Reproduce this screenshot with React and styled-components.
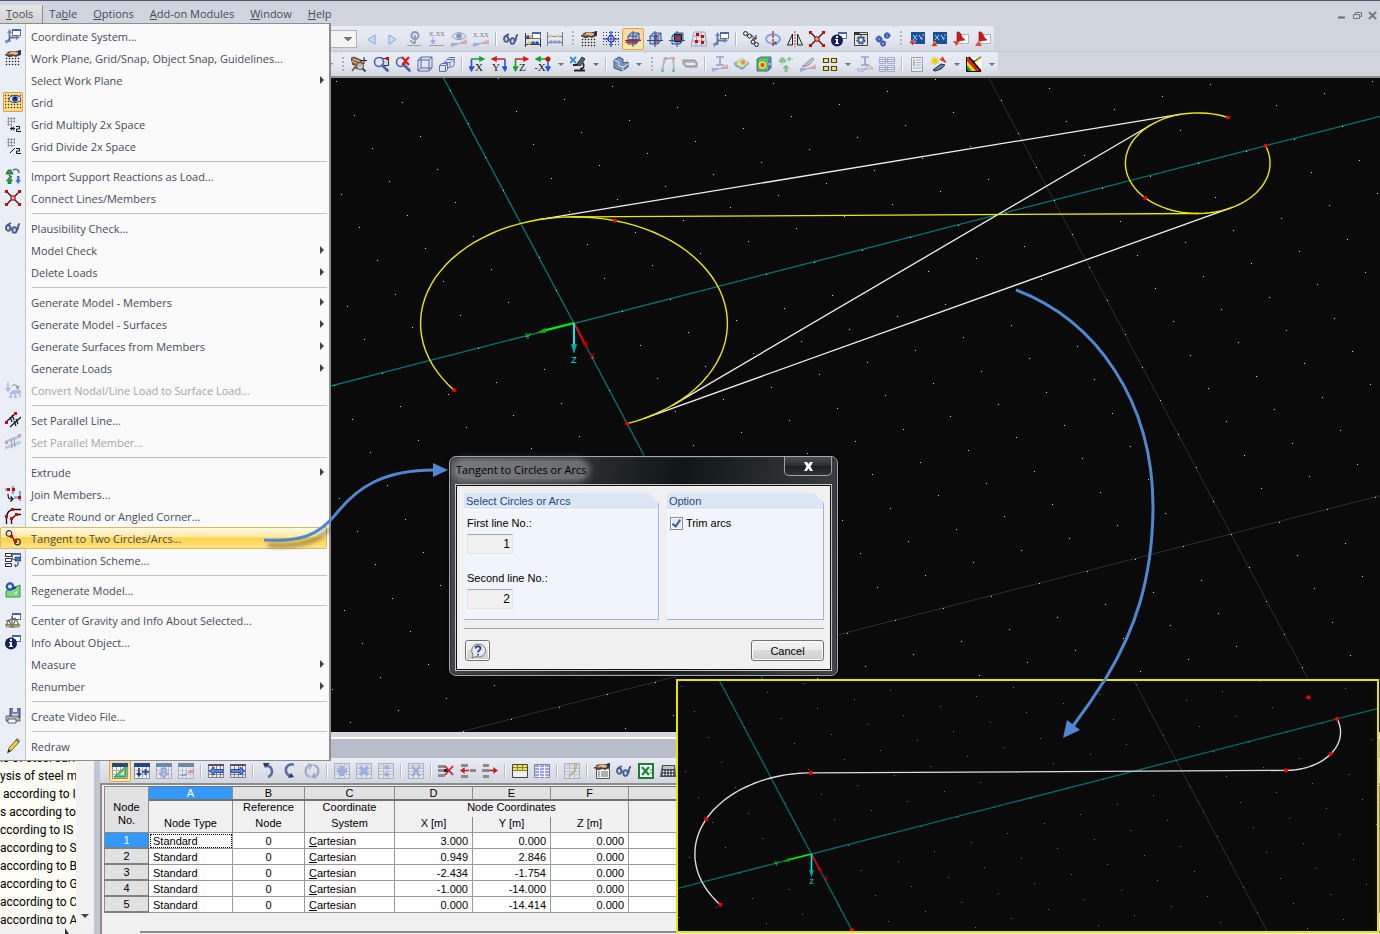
import React from "react";
import styled, { createGlobalStyle } from "styled-components";

const GlobalStyle = createGlobalStyle`
  *, *::before, *::after { box-sizing: border-box; }
  html, body { margin: 0; padding: 0; }
  body {
    font-family: "Liberation Sans", Arial, sans-serif;
    font-size: 11px;
    color: #000;
    background: #d0d4dd;
  }
  button { font: inherit; color: inherit; padding: 0; border: 0; background: none; }
`;

const uiFont = `"Open Sans", "Noto Sans", sans-serif`;

const Page = styled.div`
  position: relative;
  display: flex;
  flex-direction: column;
  height: 100vh;
  overflow: hidden;
  border-top: 1px solid #4d566c;
`;

const MenuBar = styled.nav`
  display: flex;
  height: 25px;
  padding-top: 4px;
  background: #d0d4dd;
`;

const MenuBarItem = styled.button`
  height: 20px;
  padding: 0 9px 2px 6px;
  font-family: ${uiFont};
  font-size: 11px;
  line-height: 16px;
  color: #444c5c;
  border-right: 1px solid ${(p) => (p.$open ? "#8f8f8f" : "transparent")};
  background: ${(p) => (p.$open ? "linear-gradient(#e6e6e6, #cfcfcf)" : "none")};
`;

const WindowButtons = styled.div`
  display: flex;
  gap: 4px;
  margin-left: auto;
  padding: 4px 1px 0 0;
`;

const WindowButton = styled.button`
  width: 12px;
  height: 12px;
  svg { display: block; }
`;

const ToolRow = styled.div`
  display: flex;
  height: 26px;
  border-bottom: ${(p) => (p.$last ? "2px solid #929292" : "1px solid #c3c7cf")};
`;

const ToolGroup = styled.div`
  position: relative;
  display: flex;
  align-items: center;
  height: 100%;
  padding-left: ${(p) => (p.$grip ? 12 : 0)}px;
  border-radius: 3px;
  background: linear-gradient(#e9ecf4, #e2e6ef 55%, #d2d6df);

  &::before {
    content: "";
    display: ${(p) => (p.$grip ? "block" : "none")};
    position: absolute;
    left: 6px;
    top: 5px;
    width: 2px;
    height: 15px;
    background: repeating-linear-gradient(#aeb2bd 0 2px, transparent 2px 4px);
  }
`;

const ToolButton = styled.button`
  display: flex;
  align-items: center;
  justify-content: center;
  width: 22px;
  height: 22px;
  flex: none;
  border-radius: 2px;
  border: 1px solid ${(p) => (p.$on ? "#e8a33d" : "transparent")};
  background: ${(p) => (p.$on ? "linear-gradient(#fdd79a, #ffe9a8)" : "none")};
  svg { opacity: ${(p) => (p.$dim ? 0.6 : 1)}; }
`;

const DropButton = styled.button`
  width: 13px;
  height: 22px;
  flex: none;
  &::after {
    content: "";
    display: block;
    margin: 1px auto 0;
    width: 6px;
    border: 3px solid transparent;
    border-top-color: #6d7078;
    border-bottom: 0;
  }
`;

const Separator = styled.span`
  width: 8px;
  height: 14px;
  flex: none;
  background: linear-gradient(90deg, transparent 3px, #b4b8c2 3px 4px, #fff 4px 5px, transparent 5px);
`;

const CaseSelect = styled.select`
  width: 357px;
  height: 18px;
  margin-right: 3px;
  border: 1px solid #b3b3b3;
  border-radius: 0;
  background: #f4f4f4;
  appearance: none;
  background-image: linear-gradient(45deg, transparent 50%, #777 50%), linear-gradient(-45deg, transparent 50%, #777 50%);
  background-size: 4px 4px;
  background-position: right 8px center, right 4px center;
  background-repeat: no-repeat;
`;

const HiddenTools = styled.div`
  width: 323px;
`;

const Workspace = styled.div`
  display: flex;
  flex: 1;
  min-height: 0;
`;

const Sidebar = styled.aside`
  display: flex;
  flex-direction: column;
  width: 94px;
  flex: none;
  background: #f0f0f0;
`;

const TreeArea = styled.div`
  display: flex;
  flex: 1;
  min-height: 0;
`;

const Tree = styled.ul`
  display: flex;
  flex-direction: column;
  justify-content: flex-end;
  width: 76px;
  margin: 0;
  padding: 0;
  list-style: none;
  overflow: hidden;
  background: #fcfcf3;
`;

const TreeItem = styled.li`
  height: 18px;
  flex: none;
  font-family: Roboto, ${uiFont};
  font-size: 12px;
  line-height: 18px;
  white-space: pre;
  &:last-child { height: 13px; }
`;

const ScrollTrack = styled.div`
  display: flex;
  align-items: flex-end;
  justify-content: center;
  width: 17px;
  padding-bottom: 5px;
  background: #f2f2f2;
`;

const ScrollFoot = styled.div`
  height: 10px;
  padding: 4px 0 0 64px;
  line-height: 0;
  background: #f0f0f0;
`;

const Main = styled.main`
  display: flex;
  flex-direction: column;
  flex: 1;
  min-width: 0;
  border-left: 6px solid #c0c7d3;
`;

const Canvas = styled.div`
  flex: 1;
  min-height: 0;
  overflow: hidden;
  background: #0a0a0a;
  svg { display: block; width: 100%; height: 100%; }
`;

const PanelTitle = styled.div`
  height: 26px;
  border-top: 5px solid #d3d7e0;
  background: linear-gradient(#fff 2px, #b7bdc9 2px);
`;

const PanelTools = styled.div`
  display: flex;
  align-items: center;
  height: 25px;
  padding-left: 9px;
  overflow: hidden;
  background: linear-gradient(#e9ecf4, #d2d6df);
`;

const TableArea = styled.div`
  height: 151px;
  padding: 1px 0 0 2px;
  border-top: 2px solid #8c8c8c;
  border-left: 2px solid #8c8c8c;
  background: #f0f0f0;
`;

const Grid = styled.table`
  width: 100%;
  table-layout: fixed;
  border-collapse: separate;
  border-spacing: 0;
  font-size: 11px;
`;

const HeadCell = styled.th`
  height: ${(p) => (p.$letter ? 15 : 16)}px;
  padding: 0;
  font-weight: normal;
  vertical-align: top;
  line-height: 12px;
  color: ${(p) => (p.$on ? "#fff" : "#000")};
  background: ${(p) => (p.$on ? "#3399ff" : p.$letter ? "#e1e1e1" : "#f0f0f0")};
  border-right: 1px solid #8c8c8c;
  border-bottom: ${(p) => (p.$letter ? "2px solid #707070" : p.$base ? "1px solid #9b9b9b" : "0")};
  border-top: ${(p) => (p.$letter ? "1px solid #707070" : "0")};
`;

const CornerCell = styled.th`
  padding: 8px 0 0;
  font-weight: normal;
  line-height: 13px;
  background: #e1e1e1;
  border: 1px solid #8c8c8c;
`;

const RowHead = styled.th`
  height: 16px;
  padding: 0;
  font-weight: normal;
  line-height: 13px;
  color: ${(p) => (p.$on ? "#fff" : "#000")};
  background: ${(p) => (p.$on ? "#3399ff" : "#e1e1e1")};
  border-left: 1px solid #8c8c8c;
  border-right: 1px solid #707070;
  border-bottom: 2px solid #808080;
`;

const Cell = styled.td`
  height: 16px;
  padding: 0 4px;
  line-height: 14px;
  text-align: ${(p) => p.$align || "left"};
  background: #fff;
  border-right: 1px solid #9b9b9b;
  border-bottom: 1px solid #9b9b9b;
  outline: ${(p) => (p.$focus ? "1px dotted #000" : "0")};
  outline-offset: -2px;
`;

const TabStrip = styled.div`
  height: 3px;
  margin: 18px 0 0 36px;
  border-top: 2px solid #8c8c8c;
`;

const ToolsMenu = styled.div`
  position: absolute;
  left: 0;
  top: 22px;
  width: 331px;
  padding: 1px 2px 3px 0;
  border: 1px solid #8e8e8e;
  border-left: 0;
  border-right-width: 2px;
  background: linear-gradient(90deg, #e9eef7 25px, #c5c5c5 25px 26px, #fafafa 26px);
`;

const MenuItem = styled.button`
  display: flex;
  align-items: center;
  width: 100%;
  height: 22px;
  font-family: ${uiFont};
  font-size: 11px;
  text-align: left;
  color: ${(p) => (p.disabled ? "#a4a4a4" : "#444c5c")};
  border-radius: 2px;
  background: ${(p) => (p.$hot ? "linear-gradient(#fffbe6, #ffe9a6 45%, #ffd449 50%, #ffe48c)" : "none")};
  box-shadow: ${(p) => (p.$hot ? "inset 0 0 0 1px #dbb865" : "none")};
`;

const MenuIcon = styled.span`
  display: flex;
  align-items: center;
  justify-content: center;
  width: 20px;
  height: 20px;
  margin: 0 8px 0 3px;
  border-radius: 2px;
  opacity: ${(p) => (p.$dim ? 0.5 : 1)};
  background: ${(p) => (p.$on ? "#ffdf88" : "none")};
  box-shadow: ${(p) => (p.$on ? "inset 0 0 0 1px #f0963c" : "none")};
`;

const SubArrow = styled.span`
  margin-left: auto;
  margin-right: 3px;
  border: 4px solid transparent;
  border-left: 4px solid #3c4450;
  border-right: 0;
`;

const MenuRule = styled.hr`
  height: 1px;
  margin: 4px 0 3px 32px;
  border: 0;
  background: #c2c2c2;
`;

const Dialog = styled.section`
  position: absolute;
  left: 449px;
  top: 455px;
  width: 389px;
  padding: 0 5px 4px;
  border: 1px solid #a6a8aa;
  border-radius: 7px;
  background: linear-gradient(100deg, #4a4d50, #24282b 38%, #101517 55%, #2c3033 80%, #44474a);
  box-shadow: inset 0 0 0 1px #2c2f31, 0 0 3px #000;
`;

const DialogBar = styled.header`
  display: flex;
  justify-content: space-between;
  height: 27px;
`;

const DialogTitle = styled.h1`
  margin: 4px 0 0;
  padding: 0 1px;
  height: 18px;
  font-family: ${uiFont};
  font-size: 11px;
  font-weight: normal;
  line-height: 18px;
  color: #000;
  border-radius: 9px;
  background: rgba(150, 152, 154, 0.6);
  box-shadow: 0 0 6px 3px rgba(150, 152, 154, 0.6);
`;

const CloseButton = styled.button`
  display: flex;
  align-items: center;
  justify-content: center;
  width: 48px;
  height: 19px;
  border: 1px solid #a0a2a4;
  border-top: 0;
  border-radius: 0 0 5px 5px;
  background: linear-gradient(#4b4e50, #2b2e31 50%, #1b1f22 50%, #303336);
`;

const DialogBody = styled.div`
  padding: 8px 7px 9px 8px;
  border: 1px solid #c8c8c8;
  outline: 1px solid #111;
  outline-offset: -2px;
  background: #f0f0f0;
`;

const GroupRow = styled.div`
  display: flex;
  gap: 8px;
  padding-bottom: 8px;
  border-bottom: 1px solid #a0a0a0;
`;

const Group = styled.fieldset`
  flex: ${(p) => p.$grow};
  min-width: 0;
  height: 127px;
  margin: 0;
  padding: 0;
  border: 0;
  border-right: 1px solid #a9a9ef;
  border-bottom: 1px solid #a9a9ef;
  background: #f0f4fb;
  clip-path: polygon(0 0, calc(100% - 10px) 0, 100% 10px, 100% 100%, 0 100%);
`;

const GroupTitle = styled.legend`
  float: left;
  width: 100%;
  height: 17px;
  padding: 0 2px;
  line-height: 17px;
  color: #1c4a80;
  background: #dce6f4;
  border-bottom: 1px solid #fff;
`;

const FieldList = styled.div`
  clear: both;
  display: flex;
  flex-direction: column;
  gap: 17px;
  padding: 6px 3px;
`;

const Field = styled.label`
  display: flex;
  flex-direction: column;
  gap: 3px;
  line-height: 15px;
`;

const NumberInput = styled.input`
  width: 46px;
  height: 20px;
  padding: 0 2px;
  font: inherit;
  font-size: 12px;
  text-align: right;
  border: 1px solid #dfe3ee;
  border-top-color: #a8aab2;
  background: #f0f0f0;
`;

const CheckLabel = styled.label`
  display: flex;
  align-items: center;
  gap: 3px;
  line-height: 15px;
`;

const CheckBox = styled.input`
  appearance: none;
  width: 13px;
  height: 13px;
  margin: 0;
  border: 1px solid #8a8b8d;
  background: #e6e9ef;
  box-shadow: inset 0 0 0 1px #fff;
  &:checked::after {
    content: "";
    display: block;
    width: 5px;
    height: 9px;
    margin: 0 0 0 3px;
    border: solid #3f569c;
    border-width: 0 2px 2px 0;
    transform: rotate(35deg);
  }
`;

const DialogFoot = styled.footer`
  display: flex;
  justify-content: space-between;
  padding: 11px 0 0 1px;
`;

const PushButton = styled.button`
  display: flex;
  align-items: center;
  justify-content: center;
  width: ${(p) => p.$width}px;
  height: 21px;
  border: 1px solid #707070;
  border-radius: 3px;
  background: linear-gradient(#f3f3f3, #ebebeb 48%, #dbdbdb 50%, #cfcfcf);
  box-shadow: inset 0 0 0 1px #fcfcfc;
`;

const Inset = styled.div`
  position: absolute;
  right: 1px;
  bottom: 1px;
  width: 703px;
  height: 254px;
  border: 2px solid #e4e400;
  background: #0a0a0a;
  svg { display: block; }
`;

const Arrows = styled.svg`
  position: absolute;
  left: 0;
  top: -1px;
  pointer-events: none;
`;

/* ---------- icons, all on a 16 x 16 grid ---------- */

const dotRows = (x0, y0, x1, y1, step = 3) => {
  let d = "";
  for (let y = y0; y <= y1; y += step) {
    for (let x = x0; x <= x1; x += step) d += `M${x} ${y}h1v1h-1z`;
  }
  return d;
};

const Nodes = ({ at, fill = "#e00000" }) =>
  at.map(([x, y]) => <rect key={`${x}-${y}`} x={x} y={y} width="3" height="3" fill={fill} />);

const MiniWindow = () => (
  <g>
    <rect x="7.500" y="1.500" width="8" height="6" fill="#fff" stroke="#6a7180" />
    <path d="M7 1h9v2H7z" fill="#4767a8" />
  </g>
);

const Sheet = () => (
  <g>
    <rect x=".5" y=".5" width="15" height="15" fill="#f4f5f7" stroke="#8b8f96" />
    <path d="M0 0h16v4H0z" fill="#23497e" />
    <path d="M.5 7.500h15M.5 11.500h15M4.500 4v12M8.500 4v12M12.500 4v12" stroke="#a9adb4" />
  </g>
);

const PlainSheet = () => (
  <g>
    <rect x=".5" y=".5" width="15" height="15" fill="#e6e9f0" stroke="#8e939c" />
    <path d="M1 1h14v4H1z" fill="#cdd2dc" />
    <path d="M1 5.500h14M1 8.500h14M1 11.500h14M5.500 1v14M10.500 1v14" stroke="#a7acb6" />
  </g>
);

const Hand = () => (
  <g>
    <path d="M5 1h7l4-1v5l-3 1-2 1-3-1-2 1-3 0-1-1-3-1 1-1 3 0-2-1z" fill="#5a4334" />
    <path d="M5 1.500l5 0 3 1v1.500l-3 1-3-1-2 .5-3-.5 3-1z" fill="#dcb896" />
    <path d="M13 1l3-1v4l-3 1z" fill="#30343e" />
  </g>
);

const Plane = ({ children }) => (
  <g>
    <path d="M3 5l3-3h8v7l-3 4H3z" fill="#a9cdf0" stroke="#24518f" />
    {children}
    <path d="M0 9.500h16M8 0v16M3 5h8v8M11 5l3-3" stroke="#24518f" fill="none" />
  </g>
);

const Axes = ({ v, h, text, flip }) => (
  <g>
    <path d={flip ? "M14 3v9M12 11l2 3.500 2-3.500z" : "M2.500 3v9M.5 11l2 3.500L4.500 11z"} stroke={v} fill={v} strokeWidth="1.600" />
    <path d={flip ? "M14 3H4M5 1.200L1.500 3 5 4.800z" : "M2 3h10M11 1.200L14.500 3 11 4.800z"} stroke={h} fill={h} strokeWidth="1.600" />
    <text x={flip ? 1 : 6} y="15" fontFamily="Liberation Serif, serif" fontSize="11" fill="#222">{text}</text>
  </g>
);

const Lens = () => (
  <g>
    <circle cx="6" cy="6" r="4.500" fill="#dce8fa" stroke="#4e66a8" strokeWidth="1.600" />
    <path d="M9.500 9.500l5 5" stroke="#4e66a8" strokeWidth="2.800" strokeLinecap="round" />
  </g>
);

const Slope = () => (
  <g>
    <path d="M0 13L8 13 0 16z" fill="#6e8fe6" />
    <path d="M8 12l8-4v4z" fill="#ec8585" />
    <path d="M0 12.500h16" stroke="#8a8f9a" />
  </g>
);

const IBeam = () => <path d="M4 1h8M8 1v8M4 9h8" stroke="#5b70b8" strokeWidth="1.600" fill="none" />;

const icons = {
  coord: (
    <g>
      <path d="M4.500 14V4M4 9.500h8M5 10l-3 4" stroke="#5d74a6" strokeWidth="1.800" fill="none" />
      <path d="M2 5l2.500-4L7 5zM11 7l4 2.500-4 2.500zM0 12l4 1-3 3z" fill="#6c84b8" />
      <MiniWindow />
    </g>
  ),
  handGrid: (
    <g>
      <path d={dotRows(1, 8, 14, 15)} fill="#222" stroke="#222" strokeWidth=".4" />
      <Hand />
    </g>
  ),
  eyeGrid: (
    <g>
      <path d={dotRows(0, 1, 15, 15)} fill="#403c20" stroke="#403c20" strokeWidth=".4" />
      <ellipse cx="10" cy="5" rx="6" ry="3.500" fill="#d8e2f4" stroke="#39405a" />
      <circle cx="10" cy="5" r="2.800" fill="#1c3f9c" />
      <circle cx="10" cy="4" r="1" fill="#000" />
    </g>
  ),
  gridMul: (
    <g>
      <path d="M2 2.500h8M2 5.500h8M2 8.500h5M3.500 1v9M6.500 1v9M9.500 1v6" stroke="#9b9b9b" />
      <path d="M5 12.500h5M6 10.500l3 4M9 10.500l-3 4" stroke="#111" />
      <path d="M11 10.500h3.500v2.500H11.500v2.500H16" stroke="#111" fill="none" />
    </g>
  ),
  gridDiv: (
    <g>
      <path d="M2 1.500h8M2 4.500h8M2 7.500h8M3.500 0v9M6.500 0v9M9.500 0v6" stroke="#9b9b9b" />
      <path d="M5 15l5-5" stroke="#111" />
      <path d="M11 10.500h3.500v2.500H11.500v2.500H16" stroke="#111" fill="none" />
    </g>
  ),
  support: (
    <g>
      <path d="M1 6h7L6 2H3zM4 7h1v2h2l-2.500-1z" fill="#2f9a48" stroke="#165f28" strokeWidth=".8" />
      <path d="M3 16v-3H1.500l3-4 3 4H6v3z" fill="#2f9a48" stroke="#165f28" strokeWidth=".6" />
      <path d="M8 2c4-2 6 0 6 3" stroke="#5d6f94" strokeWidth="1.500" fill="none" />
      <path d="M12 8h2.500v4H16l-3 4-2.500-4H12z" fill="#4b6fd8" />
    </g>
  ),
  connect: (
    <g>
      <path d="M1.500 1.500l13 13M14.500 1.500l-13 13" stroke="#1d1d1d" strokeWidth="1.400" />
      <circle cx="8" cy="8" r="2.300" fill="#f19a9a" stroke="#c40000" />
      <Nodes at={[[0, 0], [13, 0], [0, 13], [13, 13]]} />
    </g>
  ),
  glasses: (
    <g fill="none" stroke="#4a5c8a" strokeWidth="1.800">
      <ellipse cx="3.200" cy="8" rx="2.200" ry="2.800" fill="#c3d2ee" />
      <ellipse cx="9.500" cy="10" rx="2.200" ry="2.800" fill="#c3d2ee" />
      <path d="M2 5l4-2M5.500 8.500l2 .5M11.500 10c3 0 0-6 3.500-6" />
    </g>
  ),
  convert: (
    <g fill="none" stroke="#6179d0" strokeWidth="1.300">
      <path d="M3 0v8M.5 6L3 9l2.500-3M6 11l2-2h7l-2 2zM6 11v4M10 11v4M15 9v6M4 15h3M9 15h3" />
      <path d="M7 4c3-2 5-1 6 2M11 5l2 2 1-3" stroke="#555" />
    </g>
  ),
  parLine: (
    <g>
      <path d="M1 10L11 1M5 15L16 5M5 5l2 5M7 3l2 5M9 9l2 5M11 7l2 5" stroke="#1a1a1a" strokeWidth="1.300" />
      <Nodes at={[[0, 9], [9, 0]]} />
    </g>
  ),
  parMember: (
    <g>
      <path d="M0 8L16 2M0 14L16 8" stroke="#8ea9c8" strokeWidth="3" />
      <path d="M6 4l1 10M9 3l1 10" stroke="#555" />
      <Nodes at={[[0, 7], [13, 0]]} fill="#e84040" />
    </g>
  ),
  join: (
    <g>
      <path d="M0 3.500h5M8 0v8M15 5v10M9 11.500h7" stroke="#7fa9cf" strokeWidth="2.400" />
      <path d="M3 8c0 5 1 5 4 5M5.500 10.500L8 13l-2.500 2.500" stroke="#111" strokeWidth="1.200" fill="none" />
      <Nodes at={[[2, 2], [7, 2], [13, 10]]} />
    </g>
  ),
  corner: (
    <g>
      <path d="M1.500 16V9C2 4 5 2 8 1.500h8M6.500 16v-5l5-4.500H16" stroke="#111" strokeWidth="1.300" fill="none" />
      <Nodes at={[[0, 7], [6, 0], [5, 9], [10, 5]]} />
    </g>
  ),
  tangent: (
    <g fill="none">
      <circle cx="4" cy="3.500" r="2.800" stroke="#333" strokeWidth="1.200" />
      <circle cx="12.500" cy="12" r="2.800" stroke="#333" strokeWidth="1.200" />
      <path d="M6.500 4.500l3.500 8" stroke="#222" strokeWidth="1.300" />
      <Nodes at={[[5, 5], [9, 10]]} />
    </g>
  ),
  scheme: (
    <g>
      <path d="M.5 1.500h6v3h-6zM.5 6.500h6v3h-6zM.5 11.500h6v3h-6z" fill="#f4f4f4" stroke="#333" />
      <path d="M9 13h2M13 10v3l-3 2" stroke="#222" fill="none" />
      <MiniWindow />
      <path d="M10 5h6v4h-6z" fill="#3f6fd0" stroke="#223" strokeWidth=".6" />
    </g>
  ),
  regen: (
    <g>
      <path d="M1 9v6h14V3z" fill="#7fd884" stroke="#3c8f4b" />
      <path d="M9 12l3-3v3z" fill="#fff" />
      <circle cx="5" cy="4.500" r="3.200" fill="#dbe4f7" stroke="#2a4fa8" strokeWidth="2.200" />
      <path d="M8 7l3-2" stroke="#1d3775" strokeWidth="2" />
    </g>
  ),
  balance: (
    <g>
      <MiniWindow />
      <path d="M1 9l10-3M4 8l-3 5h5zM11 7l-3 6h6zM7 4v11M5 15h5" stroke="#5a5030" fill="none" />
      <path d="M.5 13h6l-1 2h-4zM8 13h7l-1 2H9z" fill="#d6c48a" stroke="#5a5030" strokeWidth=".6" />
    </g>
  ),
  info: (
    <g>
      <MiniWindow />
      <circle cx="6" cy="9.500" r="6" fill="#17205c" />
      <path d="M5 5h2v2H5zM4 8h3v4h1v1H4v-1h1V9H4z" fill="#fff" />
    </g>
  ),
  video: (
    <g>
      <path d="M5 0h10v10H5z" fill="#7482b4" stroke="#3e4668" />
      <path d="M8 0h4v4H8zM7 6h6v4H7z" fill="#e8ebf5" />
      <path d="M1 8h12l2 3v2H1z" fill="#b7b7b7" stroke="#444" strokeWidth=".8" />
      <path d="M3 11h8v4H3z" fill="#f5f5f5" stroke="#444" strokeWidth=".8" />
    </g>
  ),
  pencil: (
    <g>
      <path d="M3 14l1-4 7-8 3 2-7 8z" fill="#f2d33c" stroke="#403a20" strokeWidth=".8" />
      <path d="M11 2l1-1.500 2.500 2L14 4z" fill="#e28c8c" stroke="#553030" strokeWidth=".6" />
      <path d="M2 15.500l1.500-4L6 13z" fill="#222" />
    </g>
  ),
  prev: <path d="M12 4v9L5 8.500z" fill="#cfdffa" stroke="#7fa0dc" />,
  next: <path d="M4 4v9l7-4.500z" fill="#cfdffa" stroke="#7fa0dc" />,
  anchor: (
    <g fill="none" stroke="#4f6697">
      <circle cx="8" cy="4.500" r="3.500" strokeWidth="2" />
      <path d="M8 4v8c-2 0-4-1-4-3" strokeWidth="1.600" />
      <path d="M0 14.500h14" stroke="#777" />
    </g>
  ),
  xxDown: (
    <g>
      <text x="0" y="5" fontFamily="Liberation Serif, serif" fontSize="9" fill="#333">x.xx</text>
      <path d="M4 6v5M2 9.500l2 3.500 2-3.500z" stroke="#6c8bd8" fill="#6c8bd8" />
      <path d="M0 14.500h15" stroke="#777" />
    </g>
  ),
  eyeSlope: (
    <g>
      <Slope />
      <path d="M1 5.500c3-5 11-5 14 0-3 4-11 4-14 0z" fill="#dbe5f8" stroke="#667" />
      <circle cx="8" cy="5" r="2.800" fill="#3563b8" />
    </g>
  ),
  xxSlope: (
    <g>
      <text x="0" y="6" fontFamily="Liberation Serif, serif" fontSize="9" fill="#333">x.xx</text>
      <Slope />
    </g>
  ),
  abacus: (
    <g>
      <path d="M.5 2v14M15.500 2v14M0 7.500h16M0 13.500h16" stroke="#333" />
      <circle cx="3" cy="6" r="1.800" fill="#2e4a9c" />
      <circle cx="6" cy="6" r="1.800" fill="#e2c64c" />
      <circle cx="4" cy="12" r="1.800" fill="#e2c64c" />
      <circle cx="8" cy="12" r="1.800" fill="#2e4a9c" />
      <circle cx="12" cy="12" r="1.800" fill="#2e4a9c" />
      <MiniWindow />
    </g>
  ),
  abacusPlain: (
    <g opacity=".6">
      <path d="M.5 1v14M15.500 1v14M0 5.500h16M0 11.500h16" stroke="#333" />
      <circle cx="4" cy="5" r="1.800" fill="#d8bf57" />
      <circle cx="11" cy="5" r="1.800" fill="#d8bf57" />
      <circle cx="4" cy="11" r="1.800" fill="#4d6cb5" />
      <circle cx="8" cy="11" r="1.800" fill="#4d6cb5" />
      <circle cx="12" cy="11" r="1.800" fill="#4d6cb5" />
    </g>
  ),
  snap: (
    <g>
      <path d={dotRows(0, 1, 15, 15)} fill="#333" />
      <path d="M8 0v16M0 8h16" stroke="#1a2bbf" strokeWidth="1.200" />
      <circle cx="8" cy="8" r="3" fill="#fff" stroke="#1a2bbf" strokeWidth="1.200" />
      <path d="M8 6v4M6 8h4" stroke="#1a2bbf" />
    </g>
  ),
  planeXY: <Plane><path d="M0 12l4-4h12l-4 4z" fill="#e02a20" /></Plane>,
  planeYZ: <Plane><path d="M7 6l3-4v9l-3 4z" fill="#e0403a" /></Plane>,
  planeXZ: <Plane><path d="M5.500 3.500h7v7h-7z" fill="#e02a20" stroke="#200" /></Plane>,
  redGrid: (
    <g>
      <path d="M3 1h11l2 14H0zM2 5h13M1 10h14M6 1l-1 14M10 1l1 14" fill="none" stroke="#98a7b8" />
      <Nodes at={[[5, 2], [10, 4], [4, 9], [10, 10]]} />
    </g>
  ),
  copyNode: (
    <g fill="none" stroke="#222">
      <circle cx="2.500" cy="2.500" r="2" />
      <circle cx="6.500" cy="5" r="2" />
      <circle cx="10" cy="11" r="2" />
      <circle cx="13.500" cy="13.500" r="2" />
      <path d="M8 4l5 4M13 4v4H9" />
    </g>
  ),
  rotate: (
    <g fill="none">
      <ellipse cx="8" cy="8" rx="7" ry="4.500" stroke="#7ba0dc" strokeWidth="1.800" />
      <path d="M8 0v16" stroke="#e02020" strokeDasharray="3 1" strokeWidth="1.400" />
      <path d="M11 10l-4 3 5 1z" fill="#3f64ac" />
    </g>
  ),
  mirror: (
    <g fill="none" stroke="#222">
      <path d="M5.500 3v11H.5zM10.500 3v11h5z" />
      <path d="M8 0v16" stroke="#e02020" strokeDasharray="2 1" />
    </g>
  ),
  boxGear: (
    <g>
      <path d="M1.500 1.500h13v13h-13z" fill="#efe8cf" stroke="#444" />
      <path d="M1 1h5l1 2h8v1H1z" fill="#333" />
      <circle cx="8" cy="9" r="3.500" fill="none" stroke="#3d5ea8" strokeWidth="2.400" strokeDasharray="2 1" />
      <circle cx="8" cy="9" r="2.500" fill="#fff" stroke="#3d5ea8" strokeWidth="1.500" />
    </g>
  ),
  gears: (
    <g fill="#dfe8fa" stroke="#3b5db0" strokeWidth="1.800">
      <circle cx="4" cy="8" r="2.200" />
      <circle cx="12" cy="4.500" r="2.200" />
      <circle cx="8" cy="12.500" r="2" />
      <path d="M4 4v8M0 8h8M12 1v7M9 4.500h7M8 9.500v6" strokeWidth=".8" />
    </g>
  ),
  bgDown: (
    <g>
      <path d="M2 1h14v12H2z" fill="#1d4f96" />
      <path d="M4 4l4 5M8 4L4 9M10 4l3 5M13 4h2M11 7h3" stroke="#9fd4f5" />
      <path d="M0 10h7l-3.500 5z" fill="#e02a20" stroke="#fff" strokeWidth=".5" />
    </g>
  ),
  bgUp: (
    <g>
      <path d="M2 1h14v12H2z" fill="#1d4f96" />
      <path d="M4 4l4 5M8 4L4 9M10 4l3 5M13 4h2M11 7h3" stroke="#9fd4f5" />
      <path d="M0 15.500h7L3.500 10z" fill="#e02a20" stroke="#fff" strokeWidth=".5" />
    </g>
  ),
  pdfDown: (
    <g>
      <path d="M5.500 3.500h10v9h-10z" fill="#f8f8f8" stroke="#b5b5b5" />
      <path d="M4 1c5-1 3 5 8 8l-8 1z" fill="#d01818" stroke="#7c0c0c" strokeWidth=".6" />
      <path d="M0 10h7l-3.500 5z" fill="#e04a40" />
    </g>
  ),
  pdfUp: (
    <g>
      <path d="M5.500 3.500h10v9h-10z" fill="#f8f8f8" stroke="#b5b5b5" />
      <path d="M4 1c5-1 3 5 8 8l-8 1z" fill="#d01818" stroke="#7c0c0c" strokeWidth=".6" />
      <path d="M0 15h7l-3.500-5z" fill="#e04a40" />
    </g>
  ),
  pan: (
    <g>
      <path d="M0 2l3-1 7 3 2 4-3 3-4-2-3 0z" fill="#8c6b50" stroke="#4a3526" strokeWidth=".8" />
      <path d="M2 3l6 2 2 2M1 5l6 3" stroke="#e0c2a2" fill="none" />
      <path d="M13 1v7M9.500 4.500h7" stroke="#222" />
      <circle cx="9" cy="10" r="3.500" fill="#dcd5c8" fillOpacity=".7" stroke="#444" />
      <path d="M11.500 12.500l3 3" stroke="#444" strokeWidth="2" />
      <path d="M1 15l3-4 2 2" stroke="#6b5038" fill="none" strokeWidth="1.500" />
    </g>
  ),
  zoomWin: <g><path d="M7.500 2.500h8v7h-8z" fill="#d4d8e0" stroke="#333" /><Nodes at={[[6, 1], [13, 1]]} /><Lens /></g>,
  zoomOff: <g><Lens /><path d="M7 1l7 8M14 1L7 9" stroke="#e01818" strokeWidth="2.200" /></g>,
  cube: (
    <path d="M1 4l3-3h11v11l-3 3H1zM1 4h11v11M12 4l3-3M4 1v11H15M4 12l-3 3" fill="#dce6f8" fillOpacity=".6" stroke="#5568a4" />
  ),
  stack: (
    <path d="M.5 9.500h6v6h-6zM6.500 9.500l2-2h-6l-2 2M6.500 15.500l2-2v-6M5 6.500h6v5h-2M11 6.500l2-2M5 6.500l3-3h7v6l-3 2M8 3.500l2-2h6v5" fill="#dce6f8" stroke="#6375ac" />
  ),
  axX: <Axes v="#2952e0" h="#18a030" text="X" />,
  axY: <Axes v="#2952e0" h="#d02020" text="Y" flip />,
  axZ: <Axes v="#18a030" h="#d02020" text="Z" />,
  axMX: (
    <g>
      <path d="M13 4v8M11 11l2 3.500 2-3.500z" stroke="#2952e0" fill="#2952e0" strokeWidth="1.500" />
      <path d="M12 3H4M5 1L1 3l4 2z" stroke="#18a030" fill="#18a030" strokeWidth="1.500" />
      <circle cx="13" cy="3" r="2.500" fill="#c01010" />
      <text x="-1" y="15" fontFamily="Liberation Serif, serif" fontSize="11" fill="#222">-X</text>
    </g>
  ),
  view: (
    <g>
      <path d="M0 1l6 6M6 1L0 7" stroke="#2f8ad8" strokeWidth="1.800" />
      <path d="M12 1l3 2-5 7-3-2z" fill="#5b606b" stroke="#26282d" />
      <path d="M13 7c2 4 0 6-3 6M4 14.500h11M3 9h5" stroke="#26282d" strokeWidth="1.800" fill="none" />
    </g>
  ),
  solid: (
    <g>
      <path d="M1 4l5-3 4 2v4l5-1v5l-6 4-8-3z" fill="#7893b4" stroke="#3f5776" />
      <path d="M1 4l5 2v4l4 1 5-3M10 11v4" stroke="#dbe6f2" fill="none" />
    </g>
  ),
  frame: (
    <g>
      <path d="M2 14L5 3l8-1 1 12M5 3l-2 2" fill="none" stroke="#8a8a8a" strokeWidth="1.600" />
      <Nodes at={[[4, 1], [12, 1]]} fill="#e07070" />
      <Nodes at={[[1, 13], [12, 13]]} fill="#45b060" />
    </g>
  ),
  tube: (
    <g>
      <path d="M1 4h12l2 3v4H4L1 8z" fill="#b6b6b6" stroke="#8a8a8a" />
      <path d="M4 7h9v2H4z" fill="#eee" />
    </g>
  ),
  beamSlope: <g><Slope /><IBeam /></g>,
  surf: (
    <g>
      <path d="M1 6l7-4 7 4-6 7-7-2z" fill="#4fc46c" />
      <path d="M3 6l5-3 6 3-5 5-5-1z" fill="#f0e040" />
      <path d="M6 6l3-2 3 2-3 3z" fill="#e84030" />
      <path d="M1 6v3l7 4 7-6" stroke="#4a78d8" fill="none" strokeWidth="1.500" />
    </g>
  ),
  solidRes: (
    <g>
      <path d="M1 3l4-2h10v11l-3 3H1z" fill="#52c070" stroke="#356" strokeWidth=".8" />
      <circle cx="6.500" cy="9" r="3.800" fill="#f0e040" />
      <circle cx="6.500" cy="9" r="2" fill="#e84030" />
      <path d="M12 4l3-3v11l-3 3z" fill="#4a78d8" />
      <circle cx="13.500" cy="8" r="1.200" fill="#e8d040" />
    </g>
  ),
  supRes: (
    <path d="M1 6h7L6 2H3zM4 6v3M15 3h-4M12 1L9 3l3 2M7 16v-4H5l3-3 3 3H9v4z" fill="#49a860" stroke="#49a860" />
  ),
  wing: <g><Slope /><path d="M2 11L12 2l2 1-5 6z" fill="#9fb6dc" stroke="#556" /></g>,
  fourBox: (
    <path d="M1.500 2.500h5v4h-5zM9.500 2.500h5v4h-5zM1.500 10.500h5v4h-5zM9.500 10.500h5v4h-5z" fill="#f7e17c" stroke="#4d4420" strokeWidth="1.200" />
  ),
  beamWave: (
    <g>
      <IBeam />
      <path d="M0 13h16" stroke="#888" />
      <path d="M0 13c2 4 5 4 8 0" fill="none" stroke="#4a78e0" />
      <path d="M8 13c3-5 6-3 8 0" fill="none" stroke="#e04a4a" />
    </g>
  ),
  tables: (
    <path d="M.5 1.500h6v6h-6zM8.500 1.500h7v6h-7zM.5 9.500h6v6h-6zM8.500 9.500h7v6h-7zM0 3.500h16M0 5.500h16M0 11.500h16M0 13.500h16" fill="#e8edf8" stroke="#7784b0" />
  ),
  report: (
    <g>
      <path d="M2.500 1.500h11v14h-11z" fill="#f2f4f8" stroke="#6b7180" />
      <path d="M7 4h5M7 6.500h5M7 9h5M4 12h8" stroke="#7c90c0" />
      <path d="M4 3h2v3H4z" fill="#e8a050" />
      <path d="M4 6h2v4H4z" fill="#59b86a" />
    </g>
  ),
  wand: (
    <g>
      <path d="M4 1v8M0 5h8M1 2l6 6M7 2L1 8" stroke="#e8d414" strokeWidth="1.500" />
      <path d="M9 3l6 3M11 1l3 5" stroke="#d03030" strokeWidth="1.500" />
      <path d="M2 14l8-6 4 1-4 4-6 2z" fill="#5d82b6" stroke="#20283a" />
    </g>
  ),
  colors: (
    <g>
      <path d="M0 1h16v14H0z" fill="#fff" />
      <path d="M0 1h3l12 14H0z" fill="#e02020" />
      <path d="M0 4l10 11H0z" fill="#f0e000" />
      <path d="M0 8l6 7H0z" fill="#18a030" />
      <path d="M0 12l3 3H0z" fill="#1030c0" />
      <path d="M3 1l12 14M6 4l2 2 7-5" stroke="#111" strokeWidth="1.600" fill="none" />
      <path d="M.5 1v14.500H15" stroke="#111" fill="none" />
      <path d="M9 6l6-5" stroke="#d8bf3a" strokeWidth="1.500" />
    </g>
  ),
  tEdit: <g><Sheet /><path d="M2 14L14 3v11z" fill="#5fcf68" stroke="#2b7d36" /><path d="M8 12l4-4v4z" fill="#fff" /></g>,
  tInsert: <g><Sheet /><path d="M5 5v8M3 10l2 3 2-3M8 9h7M11.500 6v6" stroke="#1e3c8c" strokeWidth="1.500" fill="none" /></g>,
  tDown: <g><Sheet /><path d="M6 5h4v5h3l-5 5-5-5h3z" fill="#86a3ea" stroke="#4c68b8" /></g>,
  tSlope: <g><Sheet /><path d="M1 13l7-3v3z" fill="#5c7fe0" /><path d="M8 10l7-4v4z" fill="#e85a5a" /></g>,
  tLeft: (
    <g>
      <path d="M.5 1.500h15v13H.5zM4.500 1v14M8.500 1v14M12.500 1v14M1 11.500h15" fill="#eee" stroke="#7c8088" />
      <path d="M0 1h16v2H0z" fill="#50555e" />
      <path d="M1 8l5-4v2.500h9v3H6V12z" fill="#5a83ee" stroke="#1d358c" strokeWidth=".8" />
    </g>
  ),
  tRight: (
    <g>
      <path d="M.5 1.500h15v13H.5zM4.500 1v14M8.500 1v14M12.500 1v14M1 11.500h15" fill="#eee" stroke="#7c8088" />
      <path d="M0 1h16v2H0z" fill="#50555e" />
      <path d="M15 8l-5-4v2.500H1v3h9V12z" fill="#5a83ee" stroke="#1d358c" strokeWidth=".8" />
    </g>
  ),
  undo: (
    <g>
      <path d="M6 3c7-1 8 9 2 11" fill="none" stroke="#5a6f9c" strokeWidth="2.600" />
      <path d="M3 0h7l-5 5z" fill="#2c3c62" />
    </g>
  ),
  redo: (
    <g>
      <path d="M12 1.500H8C2 4 3 11 8 13" fill="none" stroke="#5a6f9c" strokeWidth="2.600" />
      <path d="M6 15l6-1-3-4z" fill="#2c3c62" />
    </g>
  ),
  refresh: (
    <g fill="none" stroke="#7387ad" strokeWidth="2.200">
      <path d="M7 2C0 3 0 12 6 14M9 14c7-1 7-10 1-12" />
      <path d="M5 6l3-4-4-1M11 10l-3 4 4 1" strokeWidth="1.500" />
    </g>
  ),
  tAdd: <g><PlainSheet /><path d="M8 3v10M3 8h10" stroke="#6f8be0" strokeWidth="4" /></g>,
  tMul: <g><PlainSheet /><path d="M4 4l8 8M12 4l-8 8" stroke="#6f8be0" strokeWidth="3.400" /></g>,
  tDivide: <g><PlainSheet /><path d="M7 3h3v3H7zM7 10h3v3H7z" fill="#6f8be0" stroke="#6f8be0" /></g>,
  tX: <g><PlainSheet /><path d="M4 3l8 10M12 3L4 13" stroke="#6682dd" strokeWidth="2" /></g>,
  rowDel: (
    <g>
      <path d="M0 2h7v3H0zM0 6h9v3H0zM0 11h7v3H0z" fill="#8a8a8a" />
      <path d="M6 6h4v3H6z" fill="#222" />
      <path d="M7 3l8 9M15 3l-8 9" stroke="#c82828" strokeWidth="1.800" />
    </g>
  ),
  rowIn: (
    <g>
      <path d="M1 1h7v3H1zM1 12h7v3H1zM10 6h6v3h-6z" fill="#8a8a8a" />
      <path d="M9 7.500H4M4 5.500L1 7.500l3 2z" stroke="#d01818" fill="#d01818" strokeWidth="1.300" />
    </g>
  ),
  rowOut: (
    <g>
      <path d="M1 1h6v3H1zM1 12h6v3H1zM0 6h7v3H0z" fill="#8a8a8a" />
      <path d="M7 7.500h5M12 5.500l3 2-3 2z" stroke="#d01818" fill="#d01818" strokeWidth="1.300" />
    </g>
  ),
  tYellow: (
    <g>
      <path d="M.5 1.500h15v13H.5z" fill="#eee" stroke="#444" />
      <path d="M1 2h14v5H1z" fill="#efe04c" />
      <path d="M1 4.500h14M1 7.500h14M5.500 2v6M10.500 2v6" stroke="#8c8330" />
    </g>
  ),
  tPurple: (
    <g>
      <path d="M.5 1.500h15v13H.5z" fill="#eceef8" stroke="#7d84b0" />
      <path d="M1 3h14M1 6h14M1 9h14M1 12h14" stroke="#8388e0" strokeWidth="1.500" />
      <path d="M5.500 2v13M10.500 2v13" stroke="#fff" />
    </g>
  ),
  tPick: <g><PlainSheet /><path d="M13 1l-2 8-6 5 2-4 3-1 1-8z" fill="#e6d35a" stroke="#8d7d2a" strokeWidth=".8" /></g>,
  handSheet: (
    <g>
      <path d="M2.500 5.500h13v10h-13z" fill="#f4f4f4" stroke="#555" />
      <path d="M4 9h2M7 9h7M4 11h2M7 11h7M4 13h2M7 13h7" stroke="#666" />
      <Hand />
    </g>
  ),
  excel: (
    <g>
      <path d="M1 1h14v14H1z" fill="#fff" stroke="#1e7a34" strokeWidth="2" />
      <path d="M4 4l7 8M11 4l-7 8" stroke="#1e8a3a" strokeWidth="2.400" />
      <path d="M12 7h2M12 10h2" stroke="#1e7a34" />
    </g>
  ),
  calc: (
    <g>
      <path d="M2 2h13l1 12H0z" fill="#4c5058" />
      <path d="M3 3h11v3H3z" fill="#b9c4b4" />
      <path d={dotRows(3, 8, 13, 13)} fill="#fff" stroke="#fff" strokeWidth=".6" />
    </g>
  ),
};

const Icon = ({ name }) => (
  <svg width="16" height="16" viewBox="0 0 16 16" aria-hidden="true">
    {icons[name]}
  </svg>
);

/* "|" is a separator, "v" a drop-down arrow, "*" marks a pressed tool, "~" a dimmed one */
const Tools = ({ list }) =>
  list.split(" ").map((entry, i) => {
    if (entry === "|") return <Separator key={i} />;
    if (entry === "v") return <DropButton key={i} aria-label="More" />;
    const name = entry.replace(/[*~]/, "");
    return (
      <ToolButton key={i} aria-label={name} $on={entry[0] === "*"} $dim={entry[0] === "~"}>
        <Icon name={name} />
      </ToolButton>
    );
  });

/* ---------- model view ---------- */

const RAD = Math.PI / 180;

// plan coordinates in metres to screen
const makeView = (ox, oy, scale) => (x, y) => [
  ox + scale * (x * 17.72 - y * 47.98),
  oy + scale * (x * 33.37 + y * 12.33),
];

const pt = ([x, y]) => `${x.toFixed(1)} ${y.toFixed(1)}`;

const circlePoint = (view, r, cy, deg) =>
  view(r * Math.cos(deg * RAD), cy + r * Math.sin(deg * RAD));

const arcPath = (view, r, cy, from, to) => {
  const steps = 72;
  let d = "";
  for (let i = 0; i <= steps; i++) {
    d += (i ? "L" : "M") + pt(circlePoint(view, r, cy, from + ((to - from) * i) / steps));
  }
  return d;
};

const gridDots = (view) => {
  let d = "";
  for (let x = -24; x <= 26; x++) {
    for (let y = -24; y <= 12; y++) {
      const [sx, sy] = view(x, y);
      if (sx > 90 && sx < 1500 && sy > 70 && sy < 940) d += `M${Math.round(sx)} ${Math.round(sy)}h1v1h-1z`;
    }
  }
  return d;
};

const R1 = 3;
const R2 = Math.SQRT2;
const mainView = makeView(574, 323.5, 1);
const insetView = makeView(811.5, 854, 0.76);

const Line = ({ view, from, to, color, width = 1 }) => (
  <path d={`M${pt(view(...from))}L${pt(view(...to))}`} stroke={color} strokeWidth={width} fill="none" />
);

const Tangent = ({ view, a, b, color }) => (
  <path
    d={`M${pt(circlePoint(view, R1, 0, a))}L${pt(circlePoint(view, R2, -13, b))}`}
    stroke={color}
    strokeWidth="1.3"
  />
);

const Points = ({ list }) =>
  list.map(([x, y], i) => <circle key={i} cx={x} cy={y} r="2.1" fill="#f00000" />);

const Triad = ({ x, y, scale }) => (
  <g transform={`translate(${x} ${y}) scale(${scale})`}>
    <path d="M0 0L-32 8" stroke="#00f000" strokeWidth="2" />
    <path d="M-38 10l9-5 1 5z" fill="#00a800" />
    <path d="M0 0L11 21" stroke="#f00000" strokeWidth="2" />
    <path d="M14 27l-6-7 5-2z" fill="#b00000" />
    <path d="M0 0v24" stroke="#00f0f0" strokeWidth="2" />
    <path d="M-3 21h6L0 31z" fill="#00a8a8" />
    <g fontFamily="Liberation Sans, sans-serif" fontSize="9" textAnchor="middle">
      <text x="-46" y="16" fill="#00e000">Y</text>
      <text x="0" y="40" fill="#00e0e0">Z</text>
      <text x="18" y="36" fill="#d00000">X</text>
    </g>
  </g>
);

const MainScene = () => (
  <svg role="img" aria-label="Model view">
    <g transform="translate(-100 -78)">
      <Line view={mainView} from={[10, 10]} to={[10, -20]} color="#303030" />
      <Line view={mainView} from={[-10, -10]} to={[14, -10]} color="#303030" />
      <Line view={mainView} from={[14, -10]} to={[16, -10]} color="#303030" />
      <Line view={mainView} from={[-9, 0]} to={[14, 0]} color="#007878" width="1.3" />
      <Line view={mainView} from={[0, 10]} to={[0, -20]} color="#007878" width="1.3" />
      <path d={gridDots(mainView)} fill="#ccd8cc" />
      <Tangent view={mainView} a={-173} b={-173} color="#f0f0f0" />
      <Tangent view={mainView} a={-7} b={-7} color="#f0f0f0" />
      <Tangent view={mainView} a={-19.85} b={160.15} color="#f0f0f0" />
      <g fill="none" stroke="#eaea00" strokeWidth="1.4">
        <path d={arcPath(mainView, R1, 0, 0, -288.4)} />
        <path d={arcPath(mainView, R2, -13, -90, 225)} />
      </g>
      <Tangent view={mainView} a={-160.15} b={19.85} color="#eaea00" />
      <Points
        list={[
          mainView(3, 0),
          mainView(0.949, 2.846),
          mainView(-2.434, -1.754),
          mainView(-1, -14),
          mainView(0, -14.414),
          mainView(0.557, -11.7),
        ]}
      />
      <Triad x={574} y={323} scale={1} />
    </g>
  </svg>
);

const InsetScene = () => (
  <svg width="699" height="250" role="img" aria-label="Result view">
    <g transform="translate(-678 -681)">
      <Line view={insetView} from={[-10, -10]} to={[14, -10]} color="#303030" />
      <Line view={insetView} from={[-9, 0]} to={[3, 0]} color="#006c6c" width="1.3" />
      <Line view={insetView} from={[0, 10]} to={[0, -20]} color="#006c6c" width="1.3" />
      <path d={gridDots(insetView)} fill="#707070" />
      <g fill="none" stroke="#dcdcdc" strokeWidth="1.4">
        <path d={arcPath(insetView, R1, 0, 71.6, 199.85)} />
        <path d={arcPath(insetView, R2, -13, -90, 19.85)} />
      </g>
      <Tangent view={insetView} a={-160.15} b={19.85} color="#dcdcdc" />
      <Points
        list={[
          insetView(3, 0),
          insetView(0.949, 2.846),
          circlePoint(insetView, R1, 0, 135.7),
          circlePoint(insetView, R1, 0, 199.85),
          circlePoint(insetView, R2, -13, 19.85),
          circlePoint(insetView, R2, -13, -35),
          insetView(0, -14.414),
          insetView(-1, -14),
        ]}
      />
      <Triad x={811.5} y={854} scale={0.76} />
    </g>
  </svg>
);

const PointerArrows = () => (
  <Arrows width="1380" height="934" aria-hidden="true">
    <filter id="soft" x="-10%" y="-20%" width="130%" height="150%">
      <feGaussianBlur stdDeviation="2" />
    </filter>
    <path d="M268 545C300 547 318 542 330 528" stroke="#000" strokeOpacity=".4" strokeWidth="4" fill="none" filter="url(#soft)" />
    <g fill="none" stroke="#4f88d0" strokeWidth="3">
      <path d="M264 540C300 542 318 536 336 514C358 486 385 470 434 470" />
      <path d="M1016 290C1095 320 1154 400 1153 510C1152 580 1135 630 1106 678C1096 694 1085 710 1073 726" />
    </g>
    <path d="M448 470l-15-7v14zM1063 738l4-18 13 10z" fill="#4f88d0" />
  </Arrows>
);

/* ---------- data ---------- */

const menuBar = ["Tools", "Table", "Options", "Add-on Modules", "Window", "Help"];
const accessKey = { Tools: 0, Table: 2, Options: 0, "Add-on Modules": 0, Window: 0, Help: 0 };

const toolsMenu = [
  { text: "Coordinate System...", icon: "coord" },
  { text: "Work Plane, Grid/Snap, Object Snap, Guidelines...", icon: "handGrid" },
  { text: "Select Work Plane", sub: true },
  { text: "Grid", icon: "eyeGrid", on: true },
  { text: "Grid Multiply 2x Space", icon: "gridMul" },
  { text: "Grid Divide 2x Space", icon: "gridDiv" },
  null,
  { text: "Import Support Reactions as Load...", icon: "support" },
  { text: "Connect Lines/Members", icon: "connect" },
  null,
  { text: "Plausibility Check...", icon: "glasses" },
  { text: "Model Check", sub: true },
  { text: "Delete Loads", sub: true },
  null,
  { text: "Generate Model - Members", sub: true },
  { text: "Generate Model - Surfaces", sub: true },
  { text: "Generate Surfaces from Members", sub: true },
  { text: "Generate Loads", sub: true },
  { text: "Convert Nodal/Line Load to Surface Load...", icon: "convert", off: true },
  null,
  { text: "Set Parallel Line...", icon: "parLine" },
  { text: "Set Parallel Member...", icon: "parMember", off: true },
  null,
  { text: "Extrude", sub: true },
  { text: "Join Members...", icon: "join" },
  { text: "Create Round or Angled Corner...", icon: "corner" },
  { text: "Tangent to Two Circles/Arcs...", icon: "tangent", hot: true },
  { text: "Combination Scheme...", icon: "scheme" },
  null,
  { text: "Regenerate Model...", icon: "regen" },
  null,
  { text: "Center of Gravity and Info About Selected...", icon: "balance" },
  { text: "Info About Object...", icon: "info" },
  { text: "Measure", sub: true },
  { text: "Renumber", sub: true },
  null,
  { text: "Create Video File...", icon: "video" },
  null,
  { text: "Redraw", icon: "pencil" },
];

const treeItems = [
  "is of steel surf",
  "ysis of steel me",
  " according to I",
  "s according to",
  "ccording to IS",
  "according to S",
  "according to BS",
  "according to G",
  "according to C",
  "according to A",
];

const nodes = [
  ["3.000", "0.000", "0.000"],
  ["0.949", "2.846", "0.000"],
  ["-2.434", "-1.754", "0.000"],
  ["-1.000", "-14.000", "0.000"],
  ["0.000", "-14.414", "0.000"],
];

const NodeTable = () => (
  <Grid>
    <colgroup>
      {[45, 84, 72, 90, 78, 78, 78].map((w, i) => (
        <col key={i} width={w} />
      ))}
      <col />
    </colgroup>
    <thead>
      <tr>
        <CornerCell rowSpan="3">Node<br />No.</CornerCell>
        {["A", "B", "C", "D", "E", "F", ""].map((l) => (
          <HeadCell key={l} $letter $on={l === "A"}>{l}</HeadCell>
        ))}
      </tr>
      <tr>
        <HeadCell />
        <HeadCell>Reference</HeadCell>
        <HeadCell>Coordinate</HeadCell>
        <HeadCell colSpan="3">Node Coordinates</HeadCell>
        <HeadCell />
      </tr>
      <tr>
        {["Node Type", "Node", "System", "X [m]", "Y [m]", "Z [m]", ""].map((l) => (
          <HeadCell key={l} $base>{l}</HeadCell>
        ))}
      </tr>
    </thead>
    <tbody>
      {nodes.map((xyz, i) => (
        <tr key={i}>
          <RowHead $on={i === 0}>{i + 1}</RowHead>
          <Cell $focus={i === 0}>Standard</Cell>
          <Cell $align="center">0</Cell>
          <Cell><u>C</u>artesian</Cell>
          {xyz.map((v, j) => (
            <Cell key={j} $align="right">{v}</Cell>
          ))}
          <Cell />
        </tr>
      ))}
    </tbody>
  </Grid>
);

const TangentDialog = () => (
  <Dialog aria-label="Tangent to Circles or Arcs">
    <DialogBar>
      <DialogTitle>Tangent to Circles or Arcs</DialogTitle>
      <CloseButton aria-label="Close">
        <svg width="11" height="9" viewBox="0 0 11 9">
          <path d="M1 0h3l1.500 2L7 0h3L7.500 4.500 10 9H7L5.500 6.500 4 9H1l2.500-4.500z" fill="#fff" />
        </svg>
      </CloseButton>
    </DialogBar>
    <DialogBody>
      <GroupRow>
        <Group $grow="195">
          <GroupTitle>Select Circles or Arcs</GroupTitle>
          <FieldList>
            <Field>
              First line No.:
              <NumberInput defaultValue="1" />
            </Field>
            <Field>
              Second line No.:
              <NumberInput defaultValue="2" />
            </Field>
          </FieldList>
        </Group>
        <Group $grow="157">
          <GroupTitle>Option</GroupTitle>
          <FieldList>
            <CheckLabel>
              <CheckBox type="checkbox" defaultChecked />
              Trim arcs
            </CheckLabel>
          </FieldList>
        </Group>
      </GroupRow>
      <DialogFoot>
        <PushButton $width={25} aria-label="Help">
          <svg width="16" height="16" viewBox="0 0 16 16">
            <path d="M8 1a7 6.500 0 1 1-2 12.500L2 15l1-3.500A6.500 6.500 0 0 1 8 1z" fill="#e8ebf2" stroke="#777" />
            <path d="M5.500 5.500c0-3 5-3 5 0 0 2-2.500 1.800-2.500 4M8 11v1.500" fill="none" stroke="#2b3f8c" strokeWidth="1.800" />
          </svg>
        </PushButton>
        <PushButton $width={73}>Cancel</PushButton>
      </DialogFoot>
    </DialogBody>
  </Dialog>
);

const App = () => {
  return (
    <>
      <GlobalStyle />
      <Page>
        <MenuBar>
          {menuBar.map((label) => {
            const k = accessKey[label];
            return (
              <MenuBarItem key={label} $open={label === "Tools"}>
                {label.slice(0, k)}<u>{label[k]}</u>{label.slice(k + 1)}
              </MenuBarItem>
            );
          })}
          <WindowButtons>
            <WindowButton aria-label="Minimize">
              <svg width="12" height="12"><path d="M3 8.500h7" stroke="#6e6e6e" strokeWidth="2" /></svg>
            </WindowButton>
            <WindowButton aria-label="Restore">
              <svg width="12" height="12">
                <path d="M4.500 5V3.500h6v4H9M2.500 5.500h6v4h-6z" fill="none" stroke="#757575" />
              </svg>
            </WindowButton>
            <WindowButton aria-label="Close window">
              <svg width="12" height="12"><path d="M2 3l7 7M9 3l-7 7" stroke="#7c7c7c" strokeWidth="2" /></svg>
            </WindowButton>
          </WindowButtons>
        </MenuBar>

        <ToolRow>
          <ToolGroup>
            <CaseSelect aria-label="Load case" />
            <Tools list="prev next ~anchor ~xxDown ~eyeSlope ~xxSlope | glasses abacus abacusPlain" />
          </ToolGroup>
          <ToolGroup $grip>
            <Tools list="handGrid snap *planeXY planeYZ planeXZ redGrid coord | copyNode rotate mirror connect info boxGear gears" />
          </ToolGroup>
          <ToolGroup $grip>
            <Tools list="bgDown bgUp pdfDown pdfUp" />
          </ToolGroup>
        </ToolRow>
        <ToolRow $last>
          <ToolGroup>
            <HiddenTools />
            <DropButton aria-label="More" />
          </ToolGroup>
          <ToolGroup $grip>
            <Tools list="pan zoomWin zoomOff cube stack | axX axY axZ axMX v view v | solid v" />
          </ToolGroup>
          <ToolGroup $grip>
            <Tools list="~frame tube | ~beamSlope ~surf solidRes ~supRes ~wing fourBox v ~beamWave ~tables | ~report wand v colors v" />
          </ToolGroup>
        </ToolRow>

        <Workspace>
          <Sidebar>
            <TreeArea>
              <Tree>
                {treeItems.map((t) => (
                  <TreeItem key={t}>{t}</TreeItem>
                ))}
              </Tree>
              <ScrollTrack>
                <svg width="8" height="5"><path d="M0 0h8L4 4z" fill="#444" /></svg>
              </ScrollTrack>
            </TreeArea>
            <ScrollFoot>
              <svg width="5" height="6"><path d="M1 0v6h4z" fill="#333" /></svg>
            </ScrollFoot>
          </Sidebar>
          <Main>
            <Canvas>
              <MainScene />
            </Canvas>
            <PanelTitle />
            <PanelTools>
              <Tools list="*tEdit tInsert ~tDown ~tSlope | tLeft tRight | undo redo ~refresh | ~tAdd ~tMul ~tDivide | ~tX | rowDel rowIn rowOut | tYellow tPurple | ~tPick | handSheet glasses excel calc" />
            </PanelTools>
            <TableArea>
              <NodeTable />
              <TabStrip />
            </TableArea>
          </Main>
        </Workspace>

        <ToolsMenu>
          {toolsMenu.map((m, i) =>
            m ? (
              <MenuItem key={m.text} disabled={m.off} $hot={m.hot}>
                <MenuIcon $on={m.on} $dim={m.off}>{m.icon && <Icon name={m.icon} />}</MenuIcon>
                {m.text}
                {m.sub && <SubArrow />}
              </MenuItem>
            ) : (
              <MenuRule key={i} />
            )
          )}
        </ToolsMenu>

        <TangentDialog />
        <Inset>
          <InsetScene />
        </Inset>
        <PointerArrows />
      </Page>
    </>
  );
};

export default App;
